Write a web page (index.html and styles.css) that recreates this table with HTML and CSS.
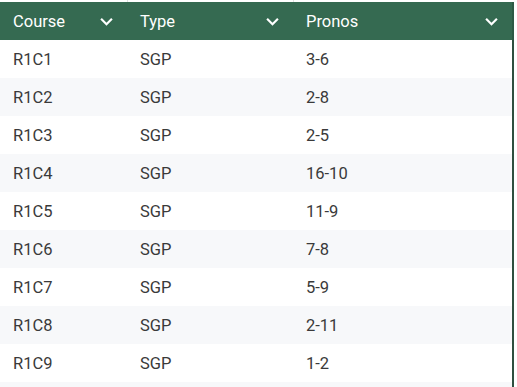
FILE: index.html
```html
<!DOCTYPE html>
<html>
<head>
<meta charset="utf-8">
<link rel="stylesheet" href="styles.css">
</head>
<body>
<div class="table">
  <div class="strip"><span></span><span></span><span></span></div>
  <div class="row head">
    <div class="cell"><span>Course</span><svg class="chev" viewBox="0 0 12 8"><path d="M1 1.5 L6 6.5 L11 1.5"/></svg></div>
    <div class="cell"><span>Type</span><svg class="chev" viewBox="0 0 12 8"><path d="M1 1.5 L6 6.5 L11 1.5"/></svg></div>
    <div class="cell"><span>Pronos</span><svg class="chev" viewBox="0 0 12 8"><path d="M1 1.5 L6 6.5 L11 1.5"/></svg></div>
  </div>
  <div class="row"><div class="cell">R1C1</div><div class="cell">SGP</div><div class="cell">3-6</div></div>
  <div class="row alt"><div class="cell">R1C2</div><div class="cell">SGP</div><div class="cell">2-8</div></div>
  <div class="row"><div class="cell">R1C3</div><div class="cell">SGP</div><div class="cell">2-5</div></div>
  <div class="row alt"><div class="cell">R1C4</div><div class="cell">SGP</div><div class="cell">16-10</div></div>
  <div class="row"><div class="cell">R1C5</div><div class="cell">SGP</div><div class="cell">11-9</div></div>
  <div class="row alt"><div class="cell">R1C6</div><div class="cell">SGP</div><div class="cell">7-8</div></div>
  <div class="row"><div class="cell">R1C7</div><div class="cell">SGP</div><div class="cell">5-9</div></div>
  <div class="row alt"><div class="cell">R1C8</div><div class="cell">SGP</div><div class="cell">2-11</div></div>
  <div class="row"><div class="cell">R1C9</div><div class="cell">SGP</div><div class="cell">1-2</div></div>
  <div class="row alt"><div class="cell"></div><div class="cell"></div><div class="cell"></div></div>
</div>
</body>
</html>
```
FILE: styles.css
```css
html, body {
  margin: 0;
  padding: 0;
  background: #fff;
  overflow: hidden;
}
body {
  font-family: Roboto, "Liberation Sans", sans-serif;
  font-size: 16.5px;
  color: #3a3a3a;
}
.table {
  width: 514px;
  height: 387px;
  overflow: hidden;
}
.strip {
  display: grid;
  grid-template-columns: 128px 166px 1fr;
  height: 2px;
}
.strip span {
  border-right: 1px solid #e2e2e2;
}
.strip span:last-child {
  border-right: none;
}
.row {
  display: grid;
  grid-template-columns: 127px 166px 1fr;
  height: 38px;
  background: #fff;
  border-right: 2px solid #2f4f3f;
}
.row.alt {
  background: #f7f8fa;
}
.row.head {
  background: #356a51;
  color: #fff;
  border-right-color: #2d5a45;
}
.cell {
  display: flex;
  align-items: center;
  padding: 0 13px;
}
.head .cell {
  justify-content: space-between;
  padding-right: 14px;
}
.chev {
  width: 13px;
  height: 9px;
  fill: none;
  stroke: #fff;
  stroke-width: 2;
}
```
